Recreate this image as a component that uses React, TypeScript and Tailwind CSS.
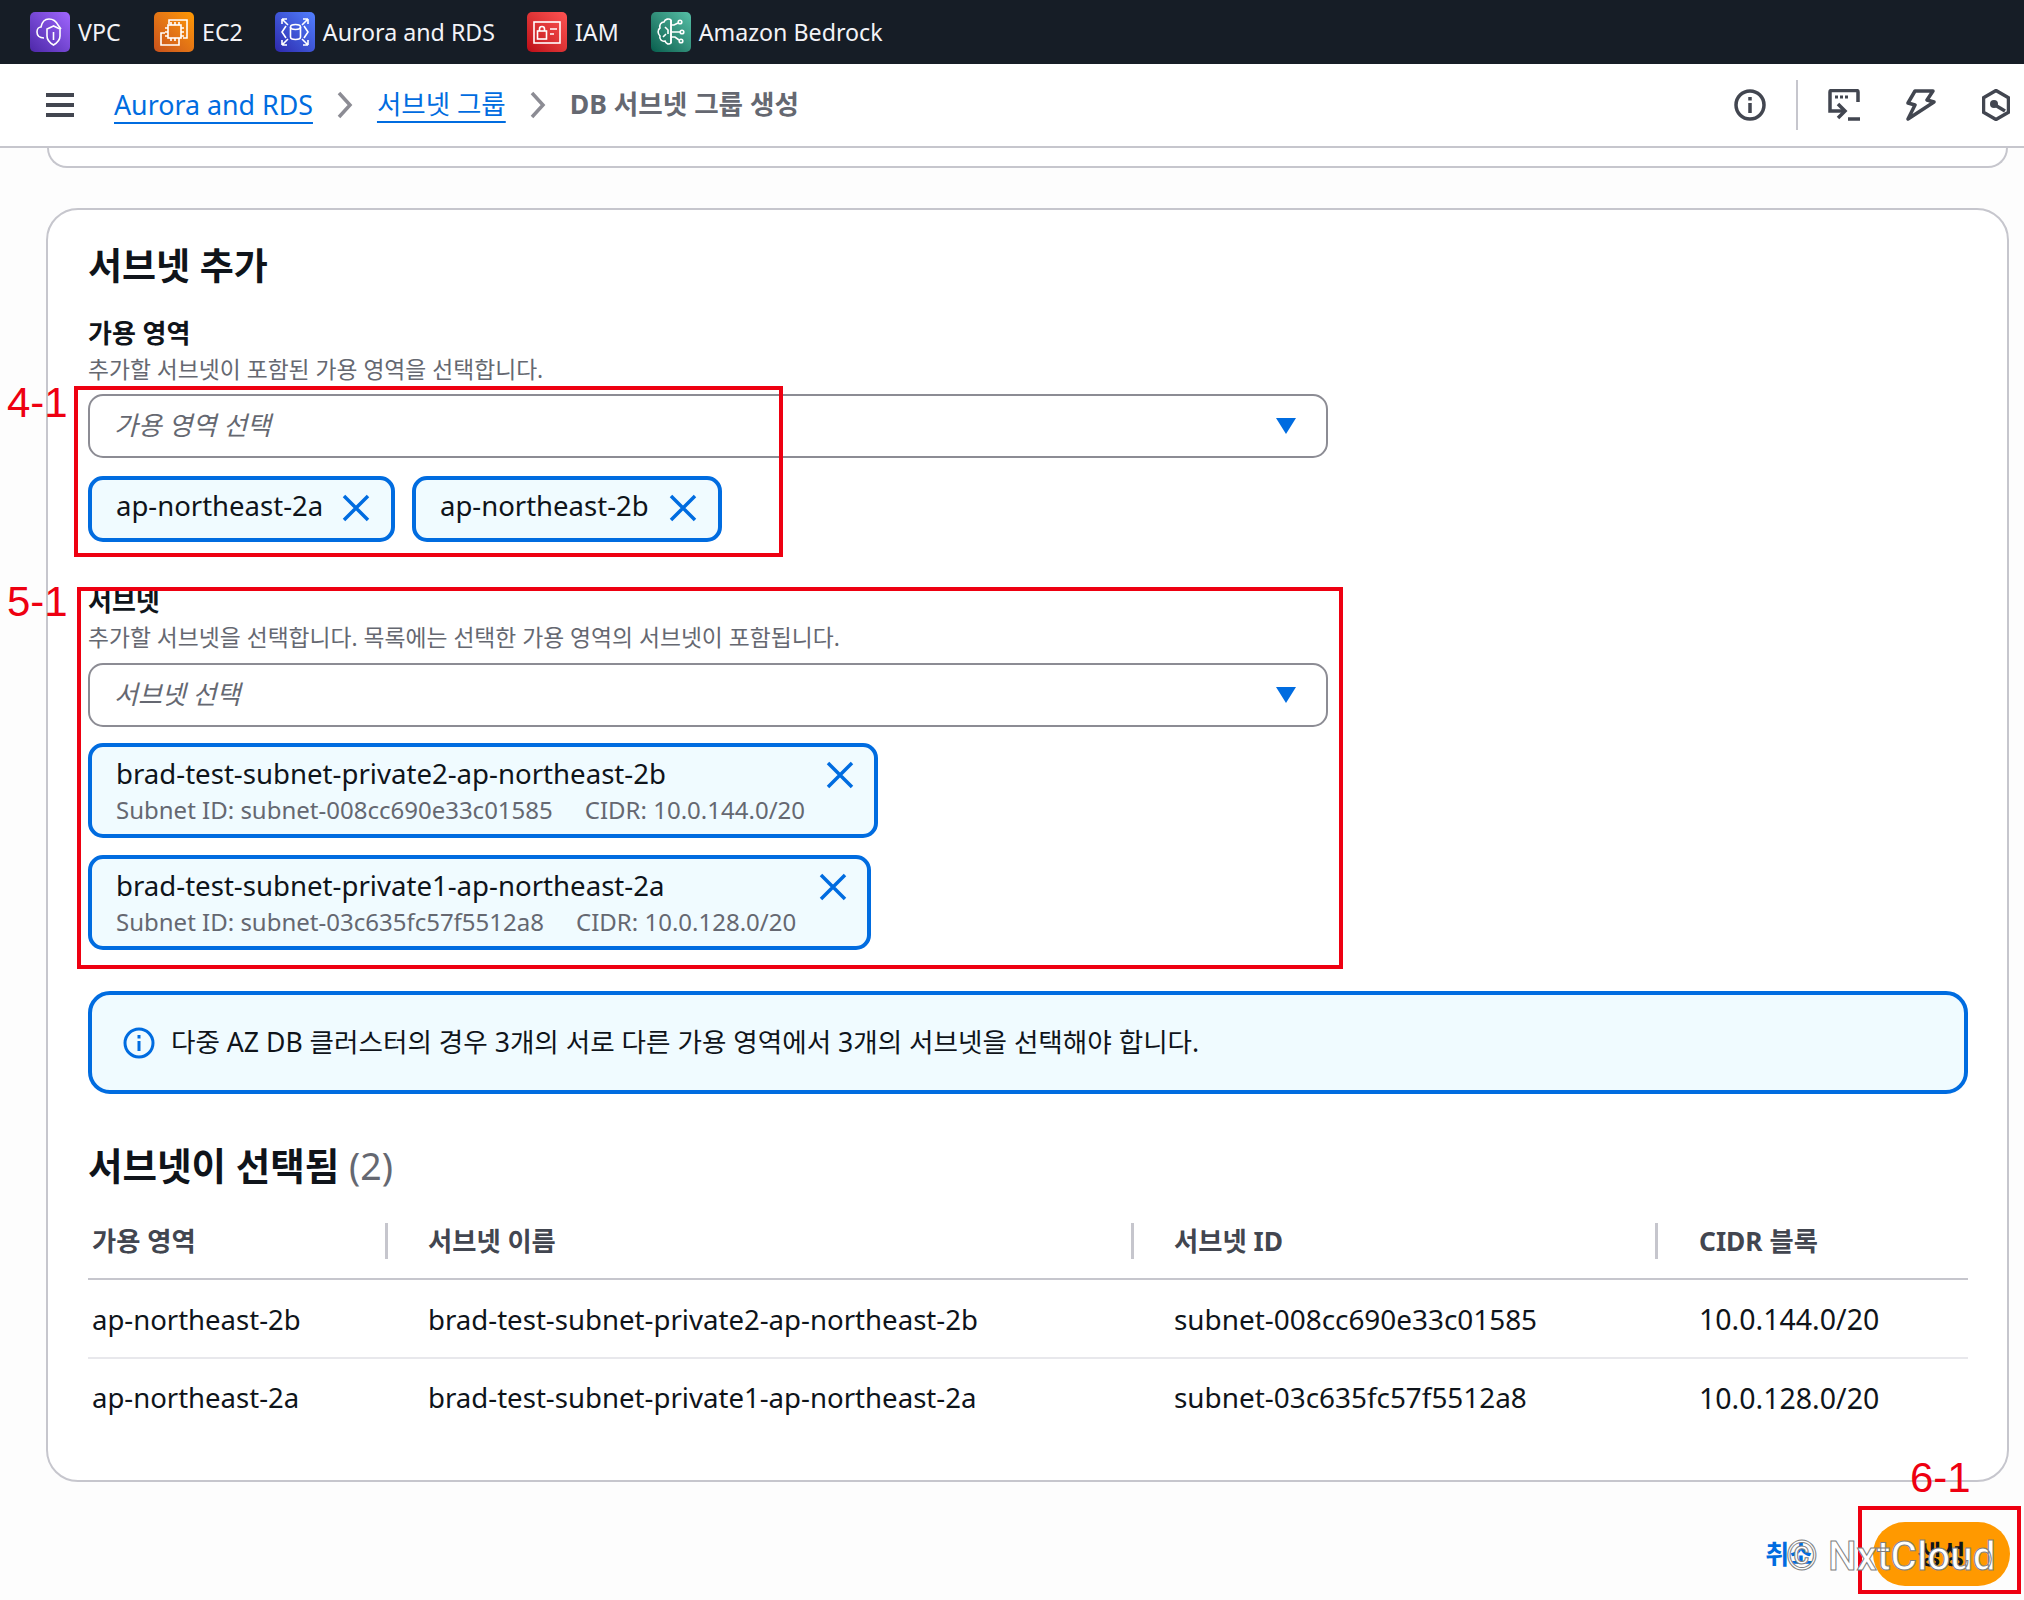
import React from 'react';

const services = [
    { name: 'VPC', bg: 'bg-gradient-to-tr from-[#4d27a8] to-[#a166ff]', kind: 'vpc', minW: 'min-w-[44px]' },
    { name: 'EC2', bg: 'bg-gradient-to-tr from-[#c8511b] to-[#ff9900]', kind: 'ec2', minW: '' },
    { name: 'Aurora and RDS', bg: 'bg-gradient-to-tr from-[#2e27ad] to-[#527fff]', kind: 'rds', minW: '' },
    { name: 'IAM', bg: 'bg-gradient-to-tr from-[#bd0816] to-[#ff5252]', kind: 'iam', minW: '' },
    { name: 'Amazon Bedrock', bg: 'bg-gradient-to-tr from-[#055f4e] to-[#56c0a7]', kind: 'bedrock', minW: '' },
];

function ServiceGlyph({ kind }: { kind: string }) {
    const common = { fill: 'none', stroke: 'white', strokeWidth: 1.6 };
    if (kind === 'vpc') {
        return (
            <svg viewBox="0 0 40 40" className="w-10 h-10" {...common}>
                <path d="M14 26C9 26 7 23 7 20c0-3 2-5 4-5 1-5 4-8 8-8 4 0 7 2 9 6l3 4" />
                <path d="M23.500 14L17 17v7c0 4 3 7 6.500 9 3.500-2 6.500-5 6.500-9v-7z" />
                <path d="M23.500 20v8" />
            </svg>
        );
    }
    if (kind === 'ec2') {
        return (
            <svg viewBox="0 0 40 40" className="w-10 h-10" {...common}>
                <path d="M15 12V8h18v18h-4" />
                <path d="M11 21H7v12h18v-4" />
                <rect x="14" y="13" width="13" height="13" />
                <path d="M17 10v3M21 10v3M25 10v3M17 26v3M21 26v3M25 26v3M11 16h3M11 20h3M11 24h3M27 16h3M27 20h3M27 24h3" />
            </svg>
        );
    }
    if (kind === 'rds') {
        return (
            <svg viewBox="0 0 40 40" className="w-10 h-10" {...common}>
                <ellipse cx="20.500" cy="15" rx="5" ry="2.500" />
                <path d="M15.500 15v10c0 1.500 2 2.500 5 2.500s5-1 5-2.500V15" />
                <path d="M7 7l6 6M7 7h5M7 7v5M33 7l-6 6M33 7h-5M33 7v5M7 33l6-6M7 33h5M7 33v-5M33 33l-6-6M33 33h-5M33 33v-5" />
                <path d="M11 14l-4 6 4 6M29 14l4 6-4 6" />
            </svg>
        );
    }
    if (kind === 'iam') {
        return (
            <svg viewBox="0 0 40 40" className="w-10 h-10" {...common}>
                <rect x="7" y="10" width="26" height="21" />
                <rect x="10.500" y="19" width="9" height="8" />
                <path d="M12.500 19v-2a2.500 2.500 0 0 1 5 0v2M23 17h7M23 22h4" />
            </svg>
        );
    }
    return (
        <svg viewBox="0 0 40 40" className="w-10 h-10" {...common}>
            <path d="M20 8c-2-2-6-1-7 2-3 0-5 3-4 6-3 2-2 6 0 8-1 3 2 6 5 5 1 3 4 4 6 2z" />
            <path d="M20 8v23M14 15l3 3v4M12 25l3-3" />
            <path d="M20 13h3l4-2M20 20h9M20 25h4l4 3" />
            <circle cx="29" cy="10" r="1.800" />
            <circle cx="31" cy="20" r="1.800" />
            <circle cx="30" cy="29" r="1.800" />
        </svg>
    );
}

function CloseIcon({ size = 'w-7 h-7' }: { size?: string }) {
    return (
        <svg viewBox="0 0 28 28" className={`${size} shrink-0`} fill="none" stroke="#006ce0" strokeWidth="3.5">
            <path d="M2 2l24 24M26 2L2 26" />
        </svg>
    );
}

function Chevron() {
    return (
        <svg viewBox="0 0 16 28" className="w-4 h-7 shrink-0" fill="none" stroke="#8c8c94" strokeWidth="3.5">
            <path d="M2 2l11 12L2 26" />
        </svg>
    );
}

function SelectBox({ placeholder }: { placeholder: string }) {
    return (
        <div className="w-[1240px] h-[64px] border-2 border-[#8c8c94] rounded-[15px] flex items-center justify-between pl-[24px] pr-[29px] bg-white">
            <span className="italic text-[#656871] pb-[2px]">{placeholder}</span>
            <svg viewBox="0 0 22 18" className="w-[22px] h-[18px]">
                <path d="M1 1h20L11 17z" fill="#006ce0" />
            </svg>
        </div>
    );
}

function RegionToken({ label, width }: { label: string; width: string }) {
    return (
        <div className={`${width} h-[66px] border-4 border-[#006ce0] bg-[#f0fbff] rounded-[15px] flex justify-between pl-[24px] pr-[21px] text-[27.500px] text-[#0f141a]`}>
            <span className="leading-[52px]">{label}</span>
            <div className="pt-[14px]">
                <CloseIcon />
            </div>
        </div>
    );
}

function SubnetToken({ name, id, cidr, width }: { name: string; id: string; cidr: string; width: string }) {
    return (
        <div className={`${width} h-[95px] border-4 border-[#006ce0] bg-[#f0fbff] rounded-[15px] pl-[24px] pt-[8px] pr-[20px] flex justify-between`}>
            <div>
                <div className="text-[27.600px] leading-[36px] text-[#0f141a]">{name}</div>
                <div className="mt-px text-[24px] leading-[36px] text-[#656871] flex gap-[32px]">
                    <span>Subnet ID: {id}</span>
                    <span>CIDR: {cidr}</span>
                </div>
            </div>
            <div className="pt-[6px]">
                <CloseIcon />
            </div>
        </div>
    );
}

const rows = [
    { az: 'ap-northeast-2b', name: 'brad-test-subnet-private2-ap-northeast-2b', id: 'subnet-008cc690e33c01585', cidr: '10.0.144.0/20' },
    { az: 'ap-northeast-2a', name: 'brad-test-subnet-private1-ap-northeast-2a', id: 'subnet-03c635fc57f5512a8', cidr: '10.0.128.0/20' },
];

export default function App() {
    return (
        <div className="relative w-[2024px] h-[1600px] overflow-hidden bg-[#fdfdfd] text-[26px] text-[#0f141a] font-['Noto_Sans','Noto_Sans_CJK_KR',sans-serif]">
            {/* Service shortcuts */}
            <div className="h-16 bg-[#161d26] flex items-center pl-[30px] gap-8 text-[23.200px]">
                {services.map((s) => (
                    <div key={s.name} className="flex items-center gap-2">
                        <div className={`w-10 h-10 rounded-[5px] ${s.bg}`}>
                            <ServiceGlyph kind={s.kind} />
                        </div>
                        <span className={`text-[#f3f3f7] ${s.minW}`}>{s.name}</span>
                    </div>
                ))}
            </div>

            {/* Breadcrumbs */}
            <div className="h-[84px] bg-white border-b-2 border-[#c6c6cd] flex items-center">
                <div className="w-[46px] shrink-0" />
                <div className="w-7 h-6 flex flex-col justify-between shrink-0">
                    <div className="h-1 bg-[#424650]" />
                    <div className="h-1 bg-[#424650]" />
                    <div className="h-1 bg-[#424650]" />
                </div>
                <div className="flex items-center ml-10 text-[26.800px] gap-[24px]">
                    <a className="text-[#006ce0] underline underline-offset-[7px] decoration-2">Aurora and RDS</a>
                    <Chevron />
                    <a className="text-[#006ce0] underline underline-offset-[7px] decoration-2 text-[26.500px]">서브넷 그룹</a>
                    <Chevron />
                    <span className="font-bold text-[#656871] text-[26.600px]">DB 서브넷 그룹 생성</span>
                </div>
                <div className="ml-auto flex items-center pr-[14px]">
                    <svg viewBox="0 0 32 32" className="w-8 h-8" fill="none" stroke="#424650" strokeWidth="3.5">
                        <circle cx="16" cy="16" r="14" />
                        <path d="M16 14v10M16 8v3.500" />
                    </svg>
                    <div className="w-0.5 h-[50px] bg-[#c6c6cd] ml-[30px] mr-[30px]" />
                    <svg viewBox="0 0 32 32" className="w-8 h-8 mr-[46px]" fill="none" stroke="#424650" strokeWidth="3.5">
                        <path d="M30 13V3a1.500 1.500 0 0 0-1.500-1.500H3.500A1.500 1.500 0 0 0 2 3v19h15" />
                        <path d="M7 8h3M12 8h3M17 8h3" strokeWidth="3" />
                        <path d="M10 15l7 7-7 7M20 30h12" />
                    </svg>
                    <svg viewBox="0 0 30 32" className="w-[30px] h-8 mr-[46px]" fill="none" stroke="#424650" strokeWidth="3.500" strokeLinejoin="round">
                        <path d="M9 2h18l-6 9 7 2L2 30l7-14-7-2z" />
                    </svg>
                    <svg viewBox="0 0 28 32" className="w-7 h-8" fill="none" stroke="#424650" strokeWidth="3.5" strokeLinejoin="round">
                        <path d="M14 1.500l12.500 7.250v14.500L14 30.500 1.500 23.250V8.750z" />
                        <circle cx="12" cy="15" r="4" fill="#424650" stroke="none" />
                        <path d="M13 16l10 6" />
                    </svg>
                </div>
            </div>

            {/* Bottom of the previous card */}
            <div className="ml-[47px] w-[1961px] h-[20px] border-x-2 border-b-2 border-[#c6c6cd] rounded-b-[28px] bg-white" />

            {/* Add subnets card */}
            <div className="ml-[46px] mt-[40px] w-[1963px] h-[1274px] bg-white border-2 border-[#c6c6cd] rounded-[32px] pl-[40px] pr-[41px] pt-[27px]">
                <h2 className="text-[37px] leading-[58px] font-bold">서브넷 추가</h2>

                <div className="mt-[19px] font-bold leading-[38px]">가용 영역</div>
                <div className="text-[22.800px] leading-[34px] text-[#656871] pt-px">추가할 서브넷이 포함된 가용 영역을 선택합니다.</div>
                <div className="mt-[7px]">
                    <SelectBox placeholder="가용 영역 선택" />
                </div>
                <div className="mt-[18px] flex gap-[17px]">
                    <RegionToken label="ap-northeast-2a" width="w-[307px]" />
                    <RegionToken label="ap-northeast-2b" width="w-[310px]" />
                </div>

                <div className="mt-[40px] font-bold leading-[38px]">서브넷</div>
                <div className="text-[22.800px] leading-[36px] text-[#656871]">추가할 서브넷을 선택합니다. 목록에는 선택한 가용 영역의 서브넷이 포함됩니다.</div>
                <div className="mt-[7px]">
                    <SelectBox placeholder="서브넷 선택" />
                </div>
                <div className="mt-[16px] flex flex-col gap-[17px]">
                    <SubnetToken name="brad-test-subnet-private2-ap-northeast-2b" id="subnet-008cc690e33c01585" cidr="10.0.144.0/20" width="w-[790px]" />
                    <SubnetToken name="brad-test-subnet-private1-ap-northeast-2a" id="subnet-03c635fc57f5512a8" cidr="10.0.128.0/20" width="w-[783px]" />
                </div>

                <div className="mt-[41px] w-[1880px] h-[103px] border-4 border-[#006ce0] bg-[#f0fbff] rounded-[22px] flex items-center pl-[31px] gap-[16px] text-[26.600px]">
                    <svg viewBox="0 0 32 32" className="w-8 h-8 shrink-0" fill="none" stroke="#006ce0" strokeWidth="3">
                        <circle cx="16" cy="16" r="14" />
                        <path d="M16 14v10M16 8v3.500" />
                    </svg>
                    <span>다중 AZ DB 클러스터의 경우 3개의 서로 다른 가용 영역에서 3개의 서브넷을 선택해야 합니다.</span>
                </div>

                <h2 className="mt-[46px] text-[37.500px] leading-[52px] font-bold">
                    서브넷이 선택됨 <span className="font-normal text-[#656871]">(2)</span>
                </h2>

                <table className="mt-[22px] w-[1880px] table-fixed">
                    <thead>
                        <tr className="h-[65px] border-b-2 border-[#c6c6cd] text-left text-[#424650] text-[26.300px]">
                            <th className="w-[300px] font-bold pl-[4px] pb-[10px]">
                                <div className="border-r-[3px] border-[#c6c6cd] h-9 leading-9">가용 영역</div>
                            </th>
                            <th className="w-[746px] font-bold pl-[40px] pb-[10px]">
                                <div className="border-r-[3px] border-[#c6c6cd] h-9 leading-9">서브넷 이름</div>
                            </th>
                            <th className="w-[524px] font-bold pl-[40px] pb-[10px]">
                                <div className="border-r-[3px] border-[#c6c6cd] h-9 leading-9">서브넷 ID</div>
                            </th>
                            <th className="font-bold pl-[41px] pb-[10px]">
                                <div className="h-9 leading-9">CIDR 블록</div>
                            </th>
                        </tr>
                    </thead>
                    <tbody>
                        {rows.map((row, index) => (
                            <tr key={row.az} className={`h-[79px] ${index === 0 ? 'border-b-2 border-[#e8e8ec]' : ''}`}>
                                <td className={`pl-[4px] text-[27.500px] ${index === 0 ? 'pt-[2px]' : ''}`}>{row.az}</td>
                                <td className={`pl-[40px] text-[27.600px] ${index === 0 ? 'pt-[2px]' : ''}`}>{row.name}</td>
                                <td className={`pl-[40px] text-[27.900px] ${index === 0 ? 'pt-[2px]' : ''}`}>{row.id}</td>
                                <td className={`pl-[41px] text-[28.500px] ${index === 0 ? 'pt-[2px]' : ''}`}>{row.cidr}</td>
                            </tr>
                        ))}
                    </tbody>
                </table>
            </div>

            {/* Footer actions */}
            <div className="mt-[40px] pr-[14px] flex items-center justify-end gap-[60px]">
                <span className="font-bold text-[#006ce0]">취소</span>
                <div className="w-[137px] h-[64px] rounded-full bg-[#ff9900] flex items-center justify-center font-bold text-[#0f141a]">생성</div>
            </div>

            {/* Annotations over the screenshot */}
            <div className="absolute left-[74px] top-[386px] w-[709px] h-[171px] border-4 border-[#ee0011]" />
            <div className="absolute left-[77px] top-[587px] w-[1266px] h-[382px] border-4 border-[#ee0011]" />
            <div className="absolute left-[1858px] top-[1506px] w-[163px] h-[88px] border-4 border-[#ee0011]" />
            <div className="absolute left-[7px] top-[379px] text-[42px] leading-[48px] text-[#ee0011] font-['Liberation_Sans',sans-serif]">4-1</div>
            <div className="absolute left-[7px] top-[578px] text-[42px] leading-[48px] text-[#ee0011] font-['Liberation_Sans',sans-serif]">5-1</div>
            <div className="absolute left-[1910px] top-[1454px] text-[42px] leading-[48px] text-[#ee0011] font-['Liberation_Sans',sans-serif]">6-1</div>
            <div className="absolute left-[1786px] top-[1532px] text-[40.500px] leading-[48px] font-medium text-white font-['Roboto',sans-serif] [-webkit-text-stroke:1px_#808080]">© NxtCloud</div>
        </div>
    );
}
